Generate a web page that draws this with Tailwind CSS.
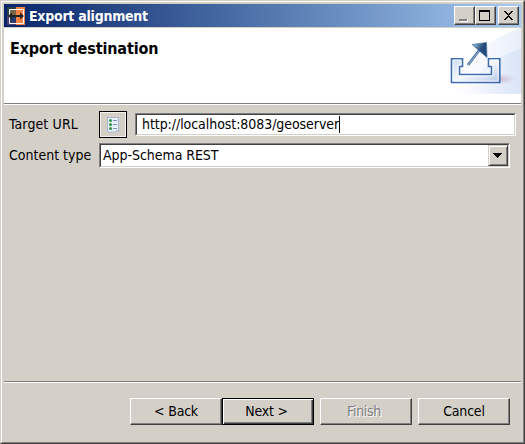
<!DOCTYPE html>
<html lang="en">
<head>
<meta charset="utf-8">
<title>Export alignment</title>
<script src="https://cdn.jsdelivr.net/npm/@tailwindcss/browser@4"></script>
</head>
<body class="w-[525px] h-[444px] overflow-hidden bg-[#d4d0c8] text-black font-['DejaVu_Sans_Condensed','DejaVu_Sans',sans-serif] [font-stretch:condensed] text-[14px] whitespace-nowrap">
<div class="w-full h-full border-t border-l border-t-[#d4d0c8] border-l-[#d4d0c8] border-r border-b border-r-[#404040] border-b-[#404040]">
<div class="w-full h-full border border-t-white border-l-white border-r-[#808080] border-b-[#808080] p-[2px] flex flex-col">

  <header class="h-[23px] shrink-0 flex items-center pl-[3px] pr-[2px] bg-linear-to-r from-[#0a246a] to-[#a6caf0]">
    <svg class="w-[18px] h-[18px] shrink-0" viewBox="0 0 18 18">
      <path fill="#28404a" d="M0 0h9v9H0z"/><path fill="#4c3d72" d="M0 9h9v9H0z"/><path fill="#f58244" d="M9 0h9v18H9z"/>
      <path fill="#77684a" d="M3 3h6v6H3z"/><path fill="#263c70" d="M3 9h6v6H3z"/>
      <path fill="none" stroke="#fff" d="M2.500 2.500h14v14h-14z"/>
      <path fill="#222" d="M1 9l4-3.500V8h8V5.500L17 9l-4 3.500V10H5v2.500z"/>
    </svg>
    <h1 class="ml-[4px] grow text-white font-bold text-[14px] leading-[20px] tracking-[-0.25px]">Export alignment</h1>
    <div class="flex">
      <button class="w-[21px] h-[19px] bg-[#d4d0c8] border border-white border-r-[#404040] border-b-[#404040] shadow-[inset_-1px_-1px_#808080]"><svg viewBox="0 0 19 17" class="w-[19px] h-[17px]"><path fill="#fff" d="M5 13h8v2H5z"/><path fill="#808080" d="M4 12h8v2H4z"/></svg></button>
      <button class="w-[21px] h-[19px] bg-[#d4d0c8] border border-white border-r-[#404040] border-b-[#404040] shadow-[inset_-1px_-1px_#808080]"><svg viewBox="0 0 19 17" class="w-[19px] h-[17px]"><path fill-rule="evenodd" d="M3 3h11v11H3zM4 5v8h9V5z"/></svg></button>
      <button class="ml-[2px] w-[21px] h-[19px] bg-[#d4d0c8] border border-white border-r-[#404040] border-b-[#404040] shadow-[inset_-1px_-1px_#808080]"><svg viewBox="0 0 19 17" class="w-[19px] h-[17px]" shape-rendering="crispEdges"><path d="M5 4h2v1h1v1h1v1h1V6h1V5h1V4h2v1h-1v1h-1v1h-1v1h-1v1h1v1h1v1h1v1h1v1h-2v-1h-1v-1h-1v-1H9v1H8v1H7v1H5v-1h1v-1h1v-1h1V9h1V8H8V7H7V6H6V5H5z"/></svg></button>
    </div>
  </header>

  <section class="mt-px h-[76px] shrink-0 bg-white border-b border-b-[#808080] flex justify-between">
    <h2 class="ml-[6px] mt-[11px] font-bold text-[16px] leading-[20px] tracking-[-0.13px]">Export destination</h2>
    <svg class="w-[75px] h-[66px]" viewBox="0 0 75 66">
      <defs>
        <linearGradient id="sky" x1="0" x2="1" y1=".7" y2=".7"><stop offset="0" stop-color="#fff"/><stop offset=".55" stop-color="#f6f8fe"/><stop offset="1" stop-color="#e9effb"/></linearGradient>
        <linearGradient id="haze" x2="1"><stop stop-color="#dbe6f9" stop-opacity="0"/><stop offset="1" stop-color="#d5e1f7"/></linearGradient>
        <linearGradient id="tray" x2="1" y2="1"><stop stop-color="#c9dbf0"/><stop offset=".5" stop-color="#f3f7fd"/><stop offset="1" stop-color="#b4c7e6"/></linearGradient>
        <linearGradient id="tip" x2="1" y2=".6"><stop stop-color="#b4d2ec"/><stop offset=".65" stop-color="#254a7c"/></linearGradient>
        <radialGradient id="shade"><stop stop-color="#b99aaf" stop-opacity=".65"/><stop offset="1" stop-color="#d8c8da" stop-opacity="0"/></radialGradient>
      </defs>
      <path fill="url(#sky)" d="M0 66C15 35 40 11 75 0v66z"/>
      <path fill="url(#haze)" opacity=".7" d="M20 66C30 43 48 28 75 21v45z"/>
      <ellipse cx="54" cy="51" rx="17" ry="6" fill="url(#shade)"/>
      <path fill="url(#tray)" stroke="#3f6cab" stroke-width="1.600" d="M5.500 30.700H16.500V38.500H13.500V46.500H45.500V38.500H42.500V30.700H53.800V54.500H5.500z"/>
      <path fill="none" stroke="#fff" opacity=".7" d="M7 32h8v5h-3v11h35V37h-3v-5h8v21H7z"/>
      <path fill="none" stroke="#42699b" stroke-width="2.600" d="M22 37l13-17"/><path fill="none" stroke="#9dbce0" d="M22 37l11-14"/>
      <path fill="url(#tip)" stroke="#45719f" stroke-width=".7" d="M26 16.500L40.500 14.500 41 29.500z"/>
    </svg>
  </section>
  <div class="h-px shrink-0 bg-white"></div>

  <main class="grow px-[5px] pt-[5px]">
    <div class="flex items-center h-[29px]">
      <label class="w-[90px] shrink-0 tracking-[0.12px]">Target URL</label>
      <button class="w-[28px] h-[27px] shrink-0 border border-black bg-[#d4d0c8] shadow-[inset_0_0_0_1px_#f4f2ee] grid place-items-center">
        <svg class="w-[12px] h-[16px]" viewBox="0 0 12 16"><path fill="#e7f0fb" stroke="#96a9c7" stroke-width=".8" d="M.5.500H11.500V14.500L9.500 13.500 7.500 15.500 5 14.500 3 15.500.500 14.500z"/><path stroke="#7b8fb9" d="M6 3.500h4M6 7.500h4M6 11.500h4"/><circle cx="3.500" cy="3.500" r="1.500" fill="#2f9048"/><circle cx="3.500" cy="7.500" r="1.500" fill="#2f9048"/><circle cx="3.500" cy="11.500" r="1.500" fill="#2f9048"/></svg>
      </button>
      <div class="ml-[8px] w-[381px] h-[23px] shrink-0 bg-white border border-t-[#808080] border-l-[#808080] border-r-white border-b-white">
        <div class="w-full h-full border border-t-[#404040] border-l-[#404040] border-r-[#d4d0c8] border-b-[#d4d0c8] pl-[5px] flex items-center"><span class="tracking-[-0.06px]">http://localhost:8083/geoserver</span><i class="w-px h-[17px] bg-black"></i></div>
      </div>
    </div>
    <div class="mt-[3px] flex items-center h-[26px]">
      <label class="w-[90px] shrink-0 tracking-normal">Content type</label>
      <div class="w-[411px] h-[25px] bg-white border border-t-[#808080] border-l-[#808080] border-r-white border-b-white">
        <div class="w-full h-full border border-t-[#404040] border-l-[#404040] border-r-[#d4d0c8] border-b-[#d4d0c8] pl-[2px] flex items-center justify-between"><span class="tracking-[-0.05px]">App-Schema REST</span>
          <button class="w-[20px] h-[21px] bg-[#d4d0c8] border border-[#d4d0c8] border-r-[#404040] border-b-[#404040] shadow-[inset_1px_1px_#fff,inset_-1px_-1px_#808080]"><svg class="w-[18px] h-[19px]" viewBox="0 0 18 19" shape-rendering="crispEdges"><path d="M4 7h9v1h-1v1h-1v1h-1v1H9v1H8v-1H7v-1H6V9H5V8H4z"/></svg></button>
        </div>
      </div>
    </div>
  </main>

  <footer class="h-[59px] shrink-0 border-t border-t-[#808080]">
    <div class="h-[58px] border-t border-t-white pt-[15px] pl-[126px] flex">
      <button class="w-[92px] h-[27px] border border-white border-r-[#404040] border-b-[#404040] shadow-[inset_-1px_-1px_#808080] pb-px tracking-[-0.2px]">&lt; Back</button>
      <button class="w-[92px] h-[27px] border border-black shadow-[inset_1px_1px_#fff,inset_-1px_-1px_#404040,inset_-2px_-2px_#808080] pb-px pr-[3px] tracking-[-0.2px]">Next &gt;</button>
      <button class="ml-[6px] w-[92px] h-[27px] border border-white border-r-[#404040] border-b-[#404040] shadow-[inset_-1px_-1px_#808080] pb-px pr-[4px] text-[#808080] [text-shadow:1px_1px_#fff] tracking-[-0.3px]">Finish</button>
      <button class="ml-[6px] w-[92px] h-[27px] border border-white border-r-[#404040] border-b-[#404040] shadow-[inset_-1px_-1px_#808080] pb-px tracking-[-0.2px]">Cancel</button>
    </div>
  </footer>
</div>
</div>
</body>
</html>
